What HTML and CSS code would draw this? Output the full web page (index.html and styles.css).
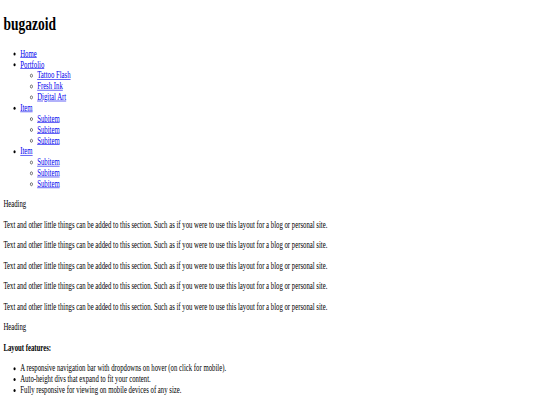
FILE: index.html
```html
<!DOCTYPE html>
<html>
<head>
<meta charset="utf-8">
<title>bugazoid</title>
<link rel="stylesheet" href="styles.css">
</head>
<body>
<div class="frame">
<div class="page">
  <h1 class="logo">bugazoid</h1>
  <ul class="nav">
    <li><a href="#">Home</a></li>
    <li><a href="#">Portfolio</a>
      <ul class="sub">
        <li><a href="#">Tattoo Flash</a></li>
        <li><a href="#">Fresh Ink</a></li>
        <li><a href="#">Digital Art</a></li>
      </ul>
    </li>
    <li><a href="#">Item</a>
      <ul class="sub">
        <li><a href="#">Subitem</a></li>
        <li><a href="#">Subitem</a></li>
        <li><a href="#">Subitem</a></li>
      </ul>
    </li>
    <li><a href="#">Item</a>
      <ul class="sub">
        <li><a href="#">Subitem</a></li>
        <li><a href="#">Subitem</a></li>
        <li><a href="#">Subitem</a></li>
      </ul>
    </li>
  </ul>
  <p class="heading">Heading</p>
  <p>Text and other little things can be added to this section. Such as if you were to use this layout for a blog or personal site.</p>
  <p>Text and other little things can be added to this section. Such as if you were to use this layout for a blog or personal site.</p>
  <p>Text and other little things can be added to this section. Such as if you were to use this layout for a blog or personal site.</p>
  <p>Text and other little things can be added to this section. Such as if you were to use this layout for a blog or personal site.</p>
  <p>Text and other little things can be added to this section. Such as if you were to use this layout for a blog or personal site.</p>
  <p class="heading">Heading</p>
  <p><strong>Layout features:</strong></p>
  <ul class="features">
    <li>A responsive navigation bar with dropdowns on hover (on click for mobile).</li>
    <li>Auto-height divs that expand to fit your content.</li>
    <li>Fully responsive for viewing on mobile devices of any size.</li>
  </ul>
</div>
</div>
</body>
</html>
```

FILE: styles.css
```css
html, body {
  margin: 0;
  padding: 0;
  background: #fff;
  overflow: hidden;
}

.frame {
  width: 540px;
  height: 405px;
  overflow: hidden;
}

.page {
  width: 1264px;
  padding: 8px;
  font-family: "Liberation Serif", "Times New Roman", serif;
  font-size: 16px;
  color: #000;
  transform: scale(0.421875, 0.603);
  transform-origin: 0 0;
}

.page a {
  color: #0000ee;
  text-decoration: underline;
}

.logo {
  font-size: 32px;
  font-weight: bold;
  margin: 13.44px 0 21.44px;
}

.nav {
  margin: 16px 0;
  padding-left: 40px;
  list-style: disc;
}

.sub {
  margin: 0;
  padding-left: 40px;
  list-style: circle;
}

.page p {
  margin: 16px 0;
}

.features {
  margin: 16px 0;
  padding-left: 40px;
  list-style: disc;
}
```
